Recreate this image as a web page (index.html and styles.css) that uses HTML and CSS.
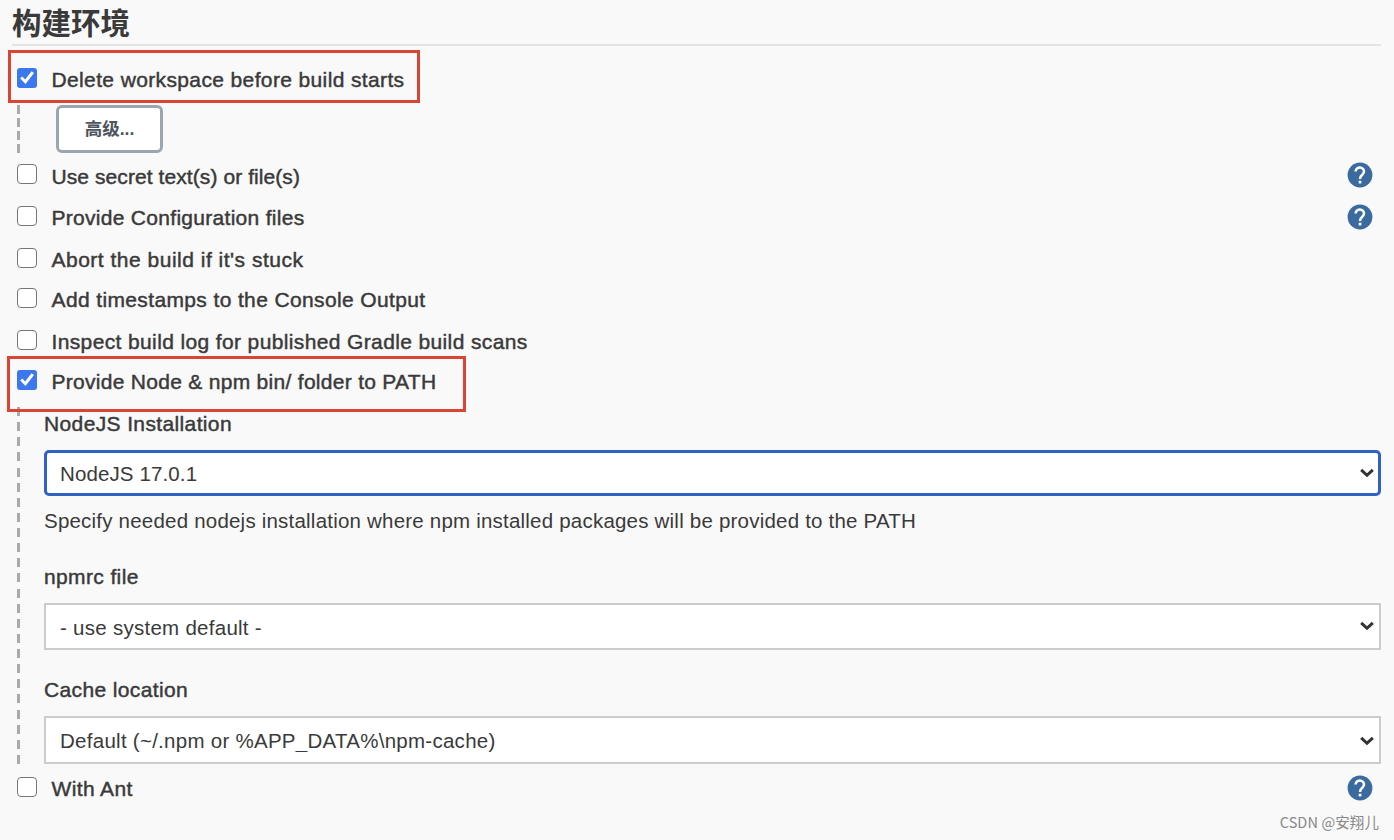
FILE: index.html
```html
<!DOCTYPE html>
<html lang="zh-CN">
<head>
  <meta charset="UTF-8">
  <meta name="viewport" content="width=device-width, initial-scale=1.0">
  <title>构建环境</title>
  <link rel="stylesheet" href="styles.css">
</head>
<body>
  <svg width="0" height="0" class="sprite">
    <symbol id="help" viewBox="0 0 26 26">
      <circle cx="13" cy="13" r="12.4" fill="#3b6a9f"/>
      <path d="M8.6 9.5a4.2 4 0 1 1 6.9 3c-1.5 1.2-2.5 2-2.5 4.4" fill="none" stroke="#fff" stroke-width="2.5"/>
      <rect x="11.7" y="18.7" width="2.7" height="2.7" fill="#fff"/>
    </symbol>
    <symbol id="arrow" viewBox="0 0 14 10">
      <path d="M1.2 1.8L7 7.3l5.8-5.5" fill="none" stroke="#333" stroke-width="3"/>
    </symbol>
  </svg>

  <form class="config">
    <h1 class="section-header">构建环境</h1>

    <div class="row first">
      <input type="checkbox" id="cleanup" checked>
      <label for="cleanup">Delete workspace before build starts</label>
      <div class="mark mark-delete"></div>
    </div>
    <div class="nested advanced">
      <button type="button" class="advanced-btn">高级...</button>
    </div>

    <div class="row tall">
      <input type="checkbox" id="secret">
      <label for="secret" class="secret-label">Use secret text(s) or file(s)</label>
      <svg class="help"><use href="#help"/></svg>
    </div>
    <div class="row tall">
      <input type="checkbox" id="files">
      <label for="files" class="files-label">Provide Configuration files</label>
      <svg class="help"><use href="#help"/></svg>
    </div>
    <div class="row">
      <input type="checkbox" id="abort">
      <label for="abort" class="abort-label">Abort the build if it's stuck</label>
    </div>
    <div class="row tall">
      <input type="checkbox" id="timestamps">
      <label for="timestamps">Add timestamps to the Console Output</label>
    </div>
    <div class="row">
      <input type="checkbox" id="gradle">
      <label for="gradle">Inspect build log for published Gradle build scans</label>
    </div>
    <div class="row">
      <input type="checkbox" id="node" checked>
      <label for="node" class="node-label">Provide Node &amp; npm bin/ folder to PATH</label>
      <div class="mark mark-node"></div>
    </div>

    <div class="nested node">
      <label class="field-label" for="install">NodeJS Installation</label>
      <div class="select focused">
        <select id="install"><option>NodeJS 17.0.1</option></select>
        <svg class="arrow"><use href="#arrow"/></svg>
      </div>
      <p class="description">Specify needed nodejs installation where npm installed packages will be provided to the PATH</p>
      <label class="field-label" for="npmrc">npmrc file</label>
      <div class="select">
        <select id="npmrc"><option>- use system default -</option></select>
        <svg class="arrow"><use href="#arrow"/></svg>
      </div>
      <label class="field-label cache-label" for="cache">Cache location</label>
      <div class="select cache">
        <select id="cache"><option>Default (~/.npm or %APP_DATA%\npm-cache)</option></select>
        <svg class="arrow"><use href="#arrow"/></svg>
      </div>
    </div>

    <div class="row last">
      <input type="checkbox" id="ant">
      <label for="ant">With Ant</label>
      <svg class="help"><use href="#help"/></svg>
    </div>
  </form>
  <footer class="watermark">CSDN @安翔儿</footer>
</body>
</html>
```
FILE: styles.css
```css
* {
  box-sizing: border-box;
}

body {
  margin: 0;
  height: 840px;
  overflow: hidden;
  background: #f9f9f9;
  color: #3a3a3a;
  font-family: "Liberation Sans", "Noto Sans CJK SC", sans-serif;
  font-size: 20.5px;
  letter-spacing: 0.21px;
}

.sprite {
  display: block;
}

.config {
  padding: 0 13px 0 12px;
}

.section-header {
  height: 46px;
  margin: 0;
  padding-top: 1px;
  border-bottom: 2px solid #e4e4e4;
  color: #3a3a3a;
  font-size: 29.5px;
  font-weight: 700;
  line-height: 45px;
  letter-spacing: 0;
}

/* Checkbox rows */
.row {
  position: relative;
  display: flex;
  align-items: flex-start;
  height: 40px;
  padding: 10px 8px 0 5px;
}

.row.first {
  margin-top: 12px;
}

.row.tall {
  height: 42px;
}

.row.last {
  margin-top: 3px;
}

.row label {
  flex: 1;
  margin-left: 14.5px;
  line-height: 24px;
}

.row label,
.field-label {
  font-size: 21px;
  letter-spacing: 0.37px;
  -webkit-text-stroke: 0.45px #3a3a3a;
}

.row .secret-label {
  padding-top: 1px;
  letter-spacing: 0.08px;
}

.row .files-label,
.row .node-label {
  letter-spacing: 0.29px;
}

.row .abort-label {
  letter-spacing: 0.5px;
}

input[type="checkbox"] {
  -webkit-appearance: none;
  appearance: none;
  width: 20px;
  height: 20px;
  margin: 0;
  border: 1.5px solid #767676;
  border-radius: 4px;
  background: #fff;
}

input[type="checkbox"]:checked {
  border: none;
  border-radius: 3px;
  background: #3b78ed;
}

input[type="checkbox"]:checked::after {
  content: "";
  display: block;
  width: 20px;
  height: 20px;
  background: #fff;
  clip-path: polygon(3.2px 10.6px, 5.3px 8.6px, 8.1px 11.6px, 14.6px 3.2px, 17px 4.9px, 8.5px 16px);
}

.help {
  width: 26px;
  height: 26px;
  margin-top: -2px;
}

/* Red frames around the important options */
.mark {
  position: absolute;
  z-index: 1;
  border: 3px solid #d84535;
  pointer-events: none;
}

.mark-delete {
  top: -8px;
  left: -4px;
  width: 412px;
  height: 53px;
}

.mark-node {
  top: -4px;
  left: -5px;
  width: 459px;
  height: 56px;
}

/* Dashed guide on the left */
.nested {
  margin-left: 5px;
  background: repeating-linear-gradient(#aaa 0 9px, transparent 9px 15.13px) left top / 3px 100% no-repeat;
}

.nested.advanced {
  height: 48px;
  margin-top: 7px;
  margin-bottom: 1px;
  padding-left: 39px;
  background-image: repeating-linear-gradient(#aaa 0 9px, transparent 9px 13px);
}

.advanced-btn {
  display: block;
  width: 107px;
  height: 48px;
  padding: 0;
  border: 3px solid #9aa5ad;
  border-radius: 6px;
  background: #fff;
  color: #4d545d;
  font: bold 17.5px/40px "Liberation Sans", "Noto Sans CJK SC", sans-serif;
}

.nested.node {
  height: 357px;
  margin-top: 7px;
  padding-left: 27px;
}

.field-label {
  display: block;
  height: 43px;
  padding-top: 5px;
  line-height: 24px;
}

.select {
  position: relative;
  height: 47px;
}

.select select {
  -webkit-appearance: none;
  appearance: none;
  display: block;
  width: 100%;
  height: 100%;
  padding: 2px 40px 0 14px;
  border: 2px solid #ccc;
  border-radius: 0;
  outline: none;
  background: #fff;
  color: #3a3a3a;
  font: inherit;
  letter-spacing: 0.27px;
}

.select.focused {
  height: 46px;
}

.select.focused select {
  padding: 0 40px 0 13px;
  border: 3px solid #2f62c4;
  border-radius: 5px;
  letter-spacing: 0.12px;
}

.select.cache {
  height: 48px;
}

.select.cache select {
  padding-top: 0;
}

.arrow {
  position: absolute;
  top: 18px;
  right: 7px;
  width: 14px;
  height: 10px;
}

.select.cache .arrow {
  top: 20px;
}

.description {
  height: 64px;
  margin: 0;
  padding-top: 13px;
  line-height: 24px;
}

.cache-label {
  height: 66px;
  padding-top: 28px;
}

.watermark {
  margin-top: 5px;
  padding-right: 15px;
  color: #888;
  font-family: "Noto Sans CJK SC", sans-serif;
  font-size: 14.5px;
  line-height: 20px;
  letter-spacing: 0.1px;
  text-align: right;
}
```
